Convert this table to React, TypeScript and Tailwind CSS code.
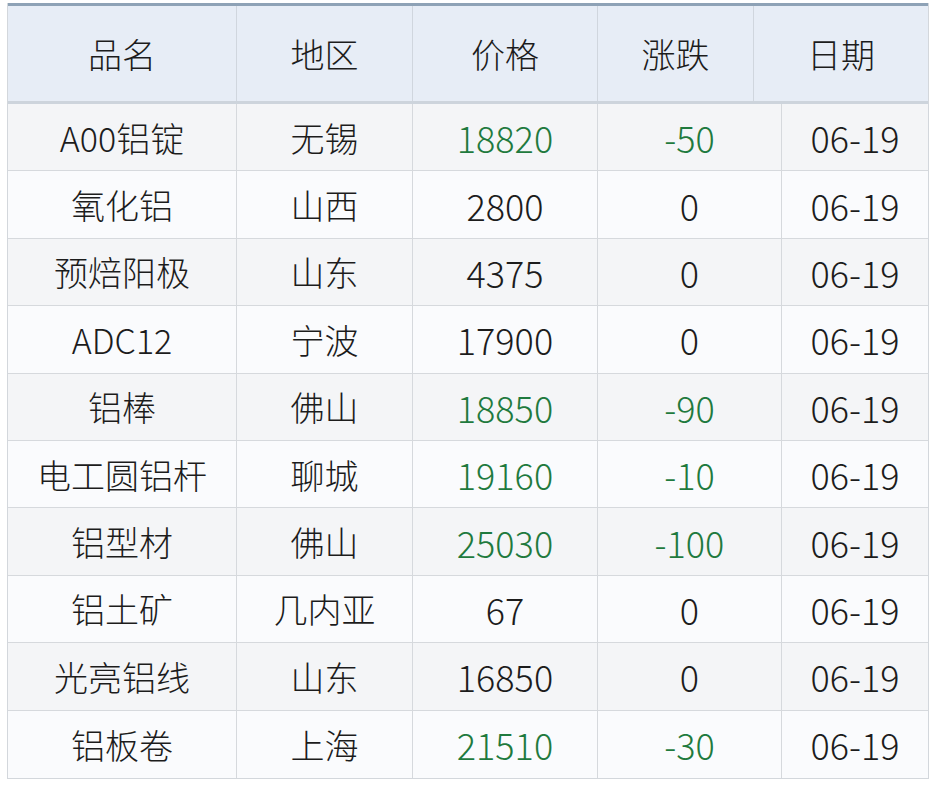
const HEADER = [
  { label: "品名", w: "w-[229px]" },
  { label: "地区", w: "w-[176px]" },
  { label: "价格", w: "w-[185px]" },
  { label: "涨跌", w: "w-[156px]" },
  { label: "日期", w: "flex-1" },
];

interface Row {
  name: string;
  region: string;
  price: string;
  change: string;
  date: string;
}

const ROWS: Row[] = [
  { name: "A00铝锭", region: "无锡", price: "18820", change: "-50", date: "06-19" },
  { name: "氧化铝", region: "山西", price: "2800", change: "0", date: "06-19" },
  { name: "预焙阳极", region: "山东", price: "4375", change: "0", date: "06-19" },
  { name: "ADC12", region: "宁波", price: "17900", change: "0", date: "06-19" },
  { name: "铝棒", region: "佛山", price: "18850", change: "-90", date: "06-19" },
  { name: "电工圆铝杆", region: "聊城", price: "19160", change: "-10", date: "06-19" },
  { name: "铝型材", region: "佛山", price: "25030", change: "-100", date: "06-19" },
  { name: "铝土矿", region: "几内亚", price: "67", change: "0", date: "06-19" },
  { name: "光亮铝线", region: "山东", price: "16850", change: "0", date: "06-19" },
  { name: "铝板卷", region: "上海", price: "21510", change: "-30", date: "06-19" },
];

export default function App() {
  return (
    <div
      className="w-[938px] h-[792px] bg-white pt-[3px] pl-[7px]"
      style={{ fontFamily: '"Noto Sans CJK SC", "Noto Sans", sans-serif' }}
    >
      <div className="w-[922px] border-l border-r border-b border-[#d3d7dc] text-[34px] font-light text-[#1c1c1c]">
        {/* header */}
        <div className="flex h-[101px] bg-[#e7edf6] border-t-[3px] border-t-[#8ea2b6] border-b-[3px] border-b-[#cdd4dc]">
          {HEADER.map((h, i) => (
            <div
              key={h.label}
              className={`${h.w} flex items-center justify-center ${
                i < HEADER.length - 1 ? "border-r border-[#d0d6de]" : ""
              }`}
            >
              {h.label}
            </div>
          ))}
        </div>

        {/* body */}
        {ROWS.map((r, idx) => {
          const down = r.change.startsWith("-");
          return (
            <div
              key={r.name}
              className={`flex h-[67.4px] ${
                idx % 2 === 0 ? "bg-[#f4f5f7]" : "bg-[#fafbfd]"
              } ${idx < ROWS.length - 1 ? "border-b border-[#d6d9dd]" : ""}`}
            >
              <div className="w-[229px] flex items-center justify-center border-r border-[#d6d9dd]">
                {r.name}
              </div>
              <div className="w-[176px] flex items-center justify-center border-r border-[#d6d9dd]">
                {r.region}
              </div>
              <div
                className={`w-[185px] flex items-center justify-center border-r border-[#d6d9dd] text-[36px] ${
                  down ? "text-[#1f7a3e]" : ""
                }`}
              >
                {r.price}
              </div>
              <div
                className={`w-[184px] flex items-center justify-center border-r border-[#d6d9dd] text-[36px] ${
                  down ? "text-[#1f7a3e]" : ""
                }`}
              >
                {r.change}
              </div>
              <div className="flex-1 flex items-center justify-center text-[36px]">{r.date}</div>
            </div>
          );
        })}
      </div>
    </div>
  );
}
